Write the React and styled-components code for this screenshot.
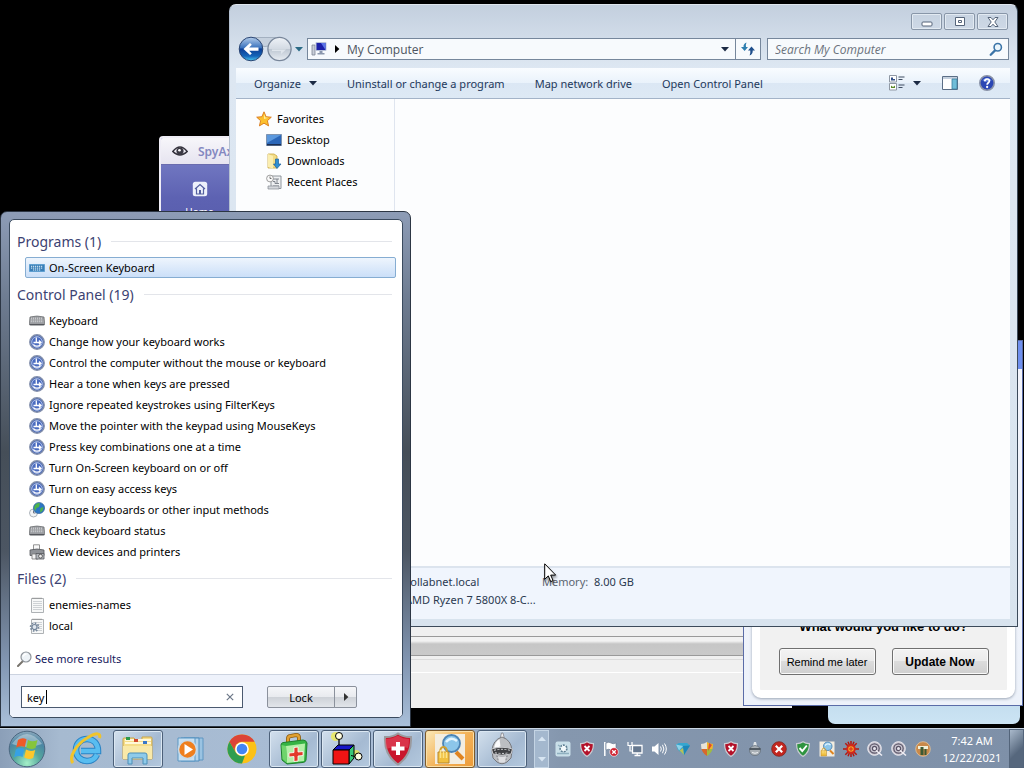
import styled, { createGlobalStyle, css } from "styled-components";

const FONT = `"Noto Sans", "Open Sans", sans-serif`;
const BAR_FONT = `"Open Sans", "Noto Sans", sans-serif`;

const COLOR = {
  toolbarText: "#1e395b",
  heading: "#3c4272",
  link: "#16205e",
  frameLine: "#3a4a5e",
  muted: "#5c6470",
};

const GlobalStyle = createGlobalStyle`
  * { box-sizing: border-box; }
  body {
    margin: 0;
    background: #000;
    font-family: ${FONT};
    font-size: 11px;
    color: #000;
  }
  button, input {
    font: inherit;
    color: inherit;
    margin: 0;
    padding: 0;
    border: 0;
    background: none;
  }
  ul, dl, dd, h2, p { margin: 0; padding: 0; list-style: none; }
  svg { display: block; flex: none; }
`;

/* ---------- icons ---------- */

const Icon = ({ size = 16, children, ...rest }) => (
  <svg width={size} height={size} viewBox="0 0 16 16" aria-hidden="true" {...rest}>
    {children}
  </svg>
);

const Triangle = ({ color = "#1b2a44", dir = "down" }) => (
  <svg width="8" height="8" viewBox="0 0 8 8" aria-hidden="true">
    <path
      d={{ down: "M0 2h8L4 6.4z", right: "M2 0v8l4.4-4z", up: "M0 6h8L4 1.6z" }[dir]}
      fill={color}
    />
  </svg>
);

const BackIcon = () => (
  <svg width="54" height="26" viewBox="0 0 54 26" aria-hidden="true">
    <defs>
      <linearGradient id="back" x1="0" y1="0" x2="0" y2="1">
        <stop offset="0" stopColor="#b4cdea" />
        <stop offset=".45" stopColor="#3a72bd" />
        <stop offset=".5" stopColor="#0c3f96" />
        <stop offset=".8" stopColor="#1464b8" />
        <stop offset="1" stopColor="#49c8f2" />
      </linearGradient>
      <linearGradient id="fwd" x1="0" y1="0" x2="0" y2="1">
        <stop offset="0" stopColor="#eef2f7" />
        <stop offset=".5" stopColor="#d3dae3" />
        <stop offset=".52" stopColor="#bfc8d3" />
        <stop offset="1" stopColor="#e8edf3" />
      </linearGradient>
    </defs>
    <path d="M16 1.500h22v6q-11 6-22 0z" fill="#c6d1de" stroke="#a3b0c0" />
    <circle cx="13" cy="13" r="11.800" fill="url(#back)" stroke="#2b4673" />
    <path d="M5.500 13l6.500-6 1.800 1.800-2.600 2.600h9.300v3.400h-9.300l2.600 2.600L12 19z" fill="#fff" />
    <circle cx="41.500" cy="13" r="11.600" fill="url(#fwd)" stroke="#78869a" strokeWidth="1.300" />
    <path d="M34 13.500h14l-5 4.500v-3h-9z" fill="#dfe5ec" />
  </svg>
);

const ComputerIcon = () => (
  <Icon>
    <path d="M1 4h3v10H1z" fill="#c8ced8" stroke="#7d8795" strokeWidth=".8" />
    <path d="M5 1.500h10v8H5z" fill="#1b20a8" stroke="#b9c3da" />
    <path d="M10 2h4.500v7z" fill="#5a74e8" />
    <path d="M8.500 10h3v2h2v1.500H6.500V12h2z" fill="#8b97ad" />
  </Icon>
);

const RefreshIcon = () => (
  <Icon>
    <path d="M1 6h2.600Q3 3 6.500 1.500 5.500 4 6 6h2L4.600 10z" fill="#2f7fb0" />
    <path d="M15 9.500h-2.300Q13 13 9.600 14.500 10.600 12 10.300 9.500H8L11.500 5.500z" fill="#1f4f8c" />
  </Icon>
);

const SearchIcon = ({ size = 14, color = "#3b74a8" }) => (
  <Icon size={size}>
    <path d="M7.500 9L2 14.500" stroke={color} strokeWidth="2.600" strokeLinecap="round" />
    <circle cx="10" cy="6" r="4.200" fill="#eaf5fc" stroke={color} strokeWidth="1.800" />
  </Icon>
);

const MoreIcon = () => (
  <Icon>
    <path d="M6 10L1 15" stroke="#77736c" strokeWidth="2" strokeLinecap="round" />
    <circle cx="9" cy="6" r="5" fill="#eef3f7" stroke="#8f959b" strokeWidth="1.200" />
    <path d="M6 5.500Q7 3 9.500 3" stroke="#fff" strokeWidth="1.500" fill="none" />
  </Icon>
);

const StarIcon = () => (
  <Icon>
    <path
      d="M8 .8l2.100 4.900 5.200.5-3.900 3.500 1.200 5.200L8 12.200l-4.600 2.700 1.200-5.200L.7 6.200l5.200-.5z"
      fill="#fbc02e"
      stroke="#d9771a"
      strokeWidth=".9"
    />
    <path d="M8 3l1.300 3.400 3 .4L8 8z" fill="#fff09a" />
  </Icon>
);

const DesktopIcon = () => (
  <Icon>
    <path d="M.5 2.500h15v11H.5z" fill="#2a66b8" stroke="#7d93b0" />
    <path d="M1 3h14L1 11z" fill="#5b98dd" />
    <path d="M1 12h14v1.500H1z" fill="#1a2e52" />
  </Icon>
);

const DownloadsIcon = () => (
  <Icon>
    <path d="M2 1h6l3 2v12H2z" fill="#f2dc86" stroke="#c9a744" strokeWidth=".8" />
    <path d="M2 1l5 2v12.500L2 14z" fill="#fbeeb0" />
    <path d="M9.500 6h3v5H15l-4 4.500L7.500 11h2z" fill="#2f8fd2" stroke="#1b5f9c" strokeWidth=".7" />
  </Icon>
);

const RecentIcon = () => (
  <Icon>
    <path d="M5 2h10v12.500H5z" fill="#eef0f2" stroke="#858b92" strokeWidth=".9" />
    <path d="M7 5h6M7 7.500h2v2h4M7 12h6M11 5v4" stroke="#757c85" strokeWidth=".9" fill="none" />
    <circle cx="4" cy="4.500" r="3.400" fill="#fafafa" stroke="#888" strokeWidth=".8" />
    <path d="M4 2.500v2h1.500" stroke="#555" strokeWidth=".8" fill="none" />
    <path d="M2 12h11v3H2z" fill="#d5d8dc" stroke="#858b92" strokeWidth=".7" />
  </Icon>
);

const ViewsIcon = () => (
  <Icon>
    <path d="M.5.5h7v6.500h-7zM.5 8.500h7V15h-7z" fill="#fff" stroke="#8f98a4" />
    <path d="M2 2.500h2V4h2v1.500H2z" fill="#2f4d86" />
    <path d="M2 10.500l2 1.500 2-1.500V13H2z" fill="#5d8a2a" />
    <path d="M9.500 2h6M9.500 4.500h4M9.500 10h6M9.500 12.500h4" stroke="#3f4d62" />
  </Icon>
);

const PaneIcon = () => (
  <Icon>
    <path d="M.5 1.500h15v13H.5z" fill="#fff" stroke="#5b6e86" />
    <path d="M1 2h14v2H1z" fill="#c4d0de" />
    <path d="M10 4h5v10h-5z" fill="#6fbdd8" stroke="#3e7fa0" strokeWidth=".8" />
  </Icon>
);

const HelpIcon = () => (
  <svg width="16" height="16" viewBox="0 0 24 24" aria-hidden="true">
    <circle cx="12" cy="12" r="10.800" fill="#2a46b4" stroke="#8a93a8" strokeWidth="2.400" />
    <path d="M5 8q7-7 14 0-7 4-14 0z" fill="#6f8de0" />
    <path
      d="M8.500 9.500Q9 6 12.200 6t3.400 3.100c0 2.600-3.400 2.600-3.400 5.400"
      fill="none"
      stroke="#fff"
      strokeWidth="2.600"
    />
    <circle cx="12.200" cy="18" r="1.700" fill="#fff" />
  </svg>
);

const OskIcon = () => (
  <Icon>
    <path d="M.5 4.500h15v7H.5z" fill="#3a7fb8" stroke="#5f9fd0" />
    <path
      d="M2 6.300h12M2 8.100h12M4 10h8"
      stroke="#e4f3fc"
      strokeWidth="1"
      strokeDasharray="1.200 .8"
    />
  </Icon>
);

const KeyboardIcon = () => (
  <Icon>
    <path d="M1 4q7-2 14 0l.7 7q-.4 1-1.500 1H1.800q-1.200 0-1.500-1z" fill="#9b9da1" stroke="#66686c" strokeWidth=".7" />
    <path d="M2 5.200h12M1.800 7h12.400M1.800 8.700h12.400" stroke="#dcdde0" strokeDasharray="1 1" />
    <path d="M.6 11h14.800v1.200H.6z" fill="#55575c" />
  </Icon>
);

const EaseIcon = () => (
  <Icon>
    <circle cx="8" cy="8" r="7.200" fill="#3f61b4" stroke="#8490ac" strokeWidth="1.500" />
    <circle cx="8" cy="8" r="5.300" fill="#4b6cc0" stroke="#c3cfec" strokeWidth=".9" />
    <path d="M7.300 3.500v5.200M4.500 8.500h7.300M10 6.500l2 2-2 1.800" stroke="#fff" strokeWidth="1.300" fill="none" />
    <path d="M4.300 10.500q3.700 3.400 7.400 0" stroke="#fff" strokeWidth="1.100" fill="none" />
  </Icon>
);

const GlobeIcon = () => (
  <Icon>
    <circle cx="4.500" cy="11" r="4" fill="#f2f4f6" stroke="#a4abb3" strokeWidth=".9" />
    <path d="M4.500 8.500V11h2" stroke="#70798a" fill="none" />
    <circle cx="10" cy="6" r="5.600" fill="#2c76c4" stroke="#2b5c90" strokeWidth=".6" />
    <path d="M6 3q3-3 5-1.500L10 5 7.500 6 6.500 9 5 6zM11.500 6l3-1-1 4-2.500 1.500z" fill="#4fb34a" />
  </Icon>
);

const PrinterIcon = () => (
  <Icon>
    <path d="M4.500.8h6v5h-6z" fill="#fafafa" stroke="#888" strokeWidth=".9" />
    <path d="M1 6q7-2 14 0v5.500H1z" fill="#8f9297" stroke="#54575c" strokeWidth=".8" />
    <path d="M3 10h6v5H3z" fill="#f4f4f4" stroke="#777" strokeWidth=".8" />
    <path d="M7 9.500h8V15H7z" fill="#b6b9be" stroke="#54575c" strokeWidth=".8" />
    <circle cx="11.500" cy="12.200" r="1.900" fill="#eee" stroke="#444" strokeWidth=".8" />
  </Icon>
);

const FileIcon = ({ gear }) => (
  <Icon>
    <path d="M2.500 1.500h12v14h-12z" fill="#f7f8f8" stroke="#a5a9ad" strokeWidth=".9" />
    <path d="M4 4.500h9M4 6.500h9M4 8.500h9M4 10.500h9M4 12.500h9" stroke="#c3c8cc" strokeWidth=".8" />
    <path d="M3.500 1.200h10" stroke="#777" strokeDasharray="1 1" />
    {gear && (
      <>
        <circle cx="5.500" cy="9" r="4" fill="none" stroke="#75879c" strokeWidth="1.600" strokeDasharray="1.600 1.500" />
        <circle cx="5.500" cy="9" r="2.500" fill="#dfe6ee" stroke="#75879c" strokeWidth="1.200" />
      </>
    )}
  </Icon>
);

const EyeIcon = () => (
  <Icon>
    <path d="M.8 8.500Q8-.5 15.200 8.500 8 15.500.8 8.500z" fill="#eceaf2" stroke="#34323c" strokeWidth="1.500" />
    <circle cx="8" cy="8" r="3.600" fill="#3b3944" />
    <circle cx="7.500" cy="7.300" r="1.300" fill="#fff" />
  </Icon>
);

const HomeIcon = () => (
  <Icon>
    <rect x=".8" y=".8" width="14.400" height="14.400" rx="2.500" fill="#eef1fb" />
    <path d="M3 8l5-4.500L13 8M4.500 7.500V13h7V7.500" fill="none" stroke="#5560a0" strokeWidth="1.200" />
    <path d="M7 9h2v4H7z" fill="#5560a0" />
  </Icon>
);

const StartOrb = () => (
  <svg width="38" height="38" viewBox="0 0 38 38" aria-hidden="true">
    <defs>
      <radialGradient id="orb" cx=".5" cy=".9" r=".95">
        <stop offset="0" stopColor="#a4efc8" />
        <stop offset=".4" stopColor="#55a79c" />
        <stop offset=".7" stopColor="#4a86a4" />
        <stop offset="1" stopColor="#9ab0c2" />
      </radialGradient>
    </defs>
    <circle cx="19" cy="19" r="17.800" fill="url(#orb)" stroke="#4b6780" />
    <path d="M4 14Q19-6 34 14q-15 6-30 0z" fill="#fff" opacity=".35" />
    <path d="M10 10q4-3 8.500-.8L16.800 17q-4-2-8.600.6z" fill="#ef5a28" />
    <path d="M20 10q4.500 2.400 9.500 0L27.500 18q-4.500 2-9.200-.4z" fill="#86c53c" />
    <path d="M7.800 19.500q4.500-2.600 8.600-.6l-1.900 8q-4-2-8.500.6z" fill="#36a1e4" />
    <path d="M18 19.600q4.500 2.400 9.200.4l-2 8q-4.700 2-9-.4z" fill="#fdc72c" />
  </svg>
);

const IeIcon = () => (
  <svg width="34" height="34" viewBox="0 0 34 34" aria-hidden="true">
    <path
      d="M28 22.500C26.200 26.500 22.500 29 18 29c-6.500 0-11-4.600-11-11S11.500 7 18 7s11 4.800 11 12H12"
      fill="none"
      stroke="#2a83c4"
      strokeWidth="6.500"
    />
    <path
      d="M28 22.500C26.200 26.500 22.500 29 18 29c-6.500 0-11-4.600-11-11S11.500 7 18 7s11 4.800 11 12H12"
      fill="none"
      stroke="#58bdf0"
      strokeWidth="4.500"
    />
    <path d="M4 31C-1 25 8 12 18 6s14-5 12.500 0" fill="none" stroke="#f0c42c" strokeWidth="3" />
  </svg>
);

const FolderIcon = () => (
  <svg width="34" height="34" viewBox="0 0 34 34" aria-hidden="true">
    <path d="M3 6h10l2 2h6V5h9q1 0 1 1v21H2V7q0-1 1-1z" fill="#f5dd8a" stroke="#c9a548" />
    <path d="M4 8h26M4 11h26" stroke="#fff8d8" strokeWidth="2" />
    <path d="M5 5h4v3H5z" fill="#2c9a4a" />
    <path d="M13 7h4v3h-4z" fill="#d24a2e" />
    <path d="M22 9h4v3h-4z" fill="#3a78c8" />
    <path d="M2 14h29v13H2z" fill="#f9e9a8" />
    <path d="M7 32V23q0-2 2-2h15q2 0 2 2v9h-4v-6H11v6z" fill="#8fcbea" stroke="#4d8fb8" />
  </svg>
);

const MediaIcon = () => (
  <svg width="30" height="30" viewBox="0 0 30 30" aria-hidden="true">
    <path d="M9 4h19v22H9z" fill="#9ac3e2" stroke="#5f96c2" />
    <path d="M6 4h18v23H6z" fill="#b4d4ec" stroke="#4f8dbd" />
    <path d="M3 4h17v23H3z" fill="#c8e0f2" stroke="#5b97c4" />
    <circle cx="12.500" cy="15.500" r="9" fill="#ef7f1e" stroke="#c8dae8" strokeWidth="1.500" />
    <path d="M9.500 10v11l8.500-5.500z" fill="#fff" />
  </svg>
);

const ChromeIcon = () => (
  <svg width="30" height="30" viewBox="0 0 30 30" aria-hidden="true">
    <circle cx="15" cy="15" r="14.500" fill="#fbc116" />
    <path d="M2.440 7.750A14.500 14.500 0 0 1 27.560 7.750H15A7.250 7.250 0 0 0 8.700 18.600z" fill="#dc4437" />
    <path d="M2.440 7.750 8.720 18.620A7.250 7.250 0 0 0 18 21.500L15 29.500A14.500 14.500 0 0 1 2.440 7.750z" fill="#2f9e50" />
    <circle cx="15" cy="15" r="6.800" fill="#fff" />
    <circle cx="15" cy="15" r="5.300" fill="#4285f4" />
  </svg>
);

const KitIcon = () => (
  <svg width="32" height="32" viewBox="0 0 32 32" aria-hidden="true">
    <path d="M10 10V6q0-3 3-3l5-1q3 0 3 3v4" fill="none" stroke="#8a5a10" strokeWidth="4" />
    <path d="M10 10V6q0-3 3-3l5-1q3 0 3 3v4" fill="none" stroke="#e0a030" strokeWidth="2.400" />
    <path d="M3 12q0-2 2-2.400L25 7q3 0 4 3l-1 17q-.4 2-2.500 2.400L9 31 4 27z" fill="#35b445" stroke="#1f7f2c" />
    <path d="M8 13l19-2.500-1 17.500L9 30z" fill="#b4f0a8" />
    <path d="M3.500 12L8 13l1 17-4.500-4z" fill="#6fd46c" />
    <path d="M16 14.500l4-.5v5l5-.5v4l-5 .5v5l-4 .5v-5l-5 .5v-4l5-.5z" fill="#e23a2a" stroke="#fff" strokeWidth=".8" />
  </svg>
);

const CubeIcon = () => (
  <svg width="34" height="36" viewBox="0 0 34 36" aria-hidden="true">
    <circle cx="6.500" cy="5.500" r="4.500" fill="#f7f03c" opacity=".7" />
    <path d="M10 7v12M20 24l8 2" stroke="#000" strokeWidth="1.300" />
    <circle cx="10" cy="5" r="3.500" fill="#fffde0" stroke="#000" />
    <circle cx="27" cy="23" r="4" fill="#f7f03c" opacity=".7" />
    <circle cx="29.500" cy="25.500" r="3.500" fill="#fffde0" stroke="#000" />
    <path d="M4 19l5-5h16l-5 5z" fill="#1616c8" stroke="#000" />
    <path d="M20 19l5-5v13l-5 6z" fill="#3ac878" stroke="#000" />
    <path d="M4 19h16v14H4z" fill="#f01414" stroke="#000" />
    <path d="M22 24.500l4 1" stroke="#000" />
  </svg>
);

const ShieldIcon = () => (
  <svg width="32" height="34" viewBox="0 0 32 34" aria-hidden="true">
    <path d="M16 1.500q6 4 13 3.500 1 18-13 27.500Q2 23 3 5q7 .5 13-3.500z" fill="#c9152c" stroke="#9a9a9e" strokeWidth="2" />
    <path d="M16 3.500q5 3.500 11 3.500 0 5-1 9-10-3-22 1-1-5-1-10 7 0 13-3.500z" fill="#e9566a" opacity=".5" />
    <path d="M14 10h4v4.500h4.500v4H18V23h-4v-4.500H9.500v-4H14z" fill="#fff" />
  </svg>
);

const SpyFinderIcon = ({ size = 32 }) => (
  <svg width={size} height={size} viewBox="0 0 32 32" aria-hidden="true">
    <path d="M1 1h30v30H1z" fill="#f3ede0" />
    <path d="M22 19l7 7" stroke="#e08420" strokeWidth="4" />
    <circle cx="17.500" cy="10.500" r="8.500" fill="#8cc6ea" stroke="#4d84b4" strokeWidth="1.800" />
    <path d="M12 9q5-6 11-1" stroke="#e3f5ff" strokeWidth="2.500" fill="none" />
    <path d="M6 20q0-6 3.500-6t3.500 6" fill="none" stroke="#d0a030" strokeWidth="2" />
    <path d="M4 19h11v11H4z" fill="#f0c040" stroke="#b8862c" />
    <path d="M6.500 17v8M9.500 18v7M12.500 19v6" stroke="#fbe28a" strokeWidth="1.500" />
  </svg>
);

const HelmetIcon = ({ size = 34 }) => (
  <svg width={size} height={size} viewBox="0 0 34 34" aria-hidden="true">
    <path d="M16.500 1h1.500l1.500 6h-4.500z" fill="#f0f0f2" stroke="#77777c" strokeWidth=".7" />
    <path d="M17 5Q7.500 8 7 19l1 7 4 4q5 3.500 10 0l4-4 1-7Q26.500 8 17 5z" fill="#bcbec2" stroke="#77797e" />
    <path d="M14.500 7Q9 11 9.500 16l6-1.500z" fill="#fbfbfc" />
    <path d="M6.500 17Q17 13.500 27.500 17l-1.500 5q-9 2.500-18 0z" fill="#3f4043" stroke="#c9cace" />
    <path d="M9 18.300q8-2 16 0M10 20.800q7 1.300 14 0" stroke="#d6d7da" strokeDasharray="2 1.500" fill="none" />
    <path d="M11 24q6 2 12 0M12 27q5 1.600 10 0" stroke="#87898e" fill="none" />
    <path d="M13 24q4 1.500 8 0l-1 6q-3 1-6 0z" fill="#dedfe2" />
  </svg>
);

/* tray icons, 16px */
const TrayShield = ({ fill = "#b3122a", mark = "x" }) => (
  <Icon>
    <path d="M8 .8q3 2 6.400 1.800.4 8.700-6.400 12.800Q1.200 11.300 1.600 2.600 5 2.800 8 .8z" fill={fill} stroke="#c9ccd2" strokeWidth="1.200" />
    {mark === "x" ? (
      <path d="M5.500 5l5 5m0-5l-5 5" stroke="#fff" strokeWidth="1.800" />
    ) : (
      <path d="M4.500 7l2.800 3 4.500-5.500" stroke="#fff" strokeWidth="1.900" fill="none" />
    )}
  </Icon>
);

const GearTrayIcon = () => (
  <Icon>
    <rect x=".5" y=".5" width="15" height="15" rx="2" fill="#c9dfe9" />
    <circle cx="8.500" cy="7.500" r="3.400" fill="#f4fafc" stroke="#5f8094" strokeWidth="1.600" strokeDasharray="2 1" />
    <path d="M3 4l3 2M2 12.500h12" stroke="#8fb0c0" strokeWidth="1.300" />
  </Icon>
);

const FlagIcon = () => (
  <Icon>
    <path d="M1.800 1v14" stroke="#fff" strokeWidth="1.500" />
    <path d="M3 2q3-1.500 5 0t5 0v7q-3 1.500-5 0T3 9z" fill="#fff" stroke="#63728a" strokeWidth=".6" />
    <circle cx="11" cy="11" r="4.300" fill="#cf2130" stroke="#fff" strokeWidth=".6" />
    <path d="M9.200 9.200l3.600 3.600m0-3.600l-3.600 3.600" stroke="#fff" strokeWidth="1.300" />
  </Icon>
);

const NetworkIcon = () => (
  <Icon>
    <path d="M5.500 4.500h9.500v7.500H5.500z" fill="#66788f" stroke="#fff" strokeWidth="1.300" />
    <path d="M7.500 14.500h6M10.200 12v2" stroke="#fff" strokeWidth="1.300" />
    <path d="M1 1v3.500h4V1M3 4.500V10h2" stroke="#fff" strokeWidth="1.200" fill="none" />
  </Icon>
);

const SpeakerIcon = () => (
  <Icon>
    <path d="M1 5.500h2.500L7.500 2v12L3.500 10.500H1z" fill="#fff" />
    <path d="M9.500 5.500q1.600 2.500 0 5M11.500 3.800q2.800 4.200 0 8.400M13.500 2.500q3.600 5.500 0 11" stroke="#fff" fill="none" />
  </Icon>
);

const GemIcon = () => (
  <Icon>
    <path d="M1 3.500L4 2h8l3 2.500L9 14 3 9z" fill="#35a6cf" />
    <path d="M1 3.500l7 1.500-4 4.500z" fill="#8fd2e8" />
    <path d="M8 5l7-.5L9 14z" fill="#1f86b8" />
    <path d="M4.500 9.500L8 7l1 7z" fill="#b9bf58" />
  </Icon>
);

const DefenderIcon = () => (
  <Icon>
    <path d="M8 1v7H2.500Q2 5 2 3q3 0 6-2z" fill="#e8e3d8" />
    <path d="M8 1v7h5.500Q14 5 14 3q-3 0-6-2z" fill="#f0b62a" />
    <path d="M8 8v7Q3.500 12 2.500 8z" fill="#d9682a" />
    <path d="M8 8v7q4.500-3 5.500-7z" fill="#a0bb42" />
    <path d="M10 2l3 2-4 6z" fill="#e04a2e" />
  </Icon>
);

const ErrorIcon = () => (
  <Icon>
    <circle cx="8" cy="8" r="7.300" fill="#c3261f" stroke="#7d2622" strokeWidth=".8" />
    <path d="M4.800 4.800l6.400 6.400m0-6.400l-6.400 6.400" stroke="#fff" strokeWidth="2.200" />
  </Icon>
);

const KnobIcon = () => (
  <Icon>
    <path d="M7 1h2l1 4H6z" fill="#dfe3e6" />
    <path d="M3 7q5-5 10 0l.5 3q-1 4.500-5.500 4.500T2.500 10z" fill="#a9b0b6" stroke="#66717c" strokeWidth=".8" />
    <path d="M2.500 8h11" stroke="#3e4850" strokeWidth="1.600" />
    <path d="M5 11.500q3 1.500 6 0" stroke="#eef1f3" fill="none" />
  </Icon>
);

const VirusIcon = () => (
  <Icon>
    <g stroke="#b3170f" strokeWidth="1.500">
      <path d="M8 0v16M0 8h16M2.300 2.300l11.400 11.400M13.700 2.300L2.300 13.700M5 .8l6 14.400M11 .8L5 15.200" />
    </g>
    <circle cx="8" cy="8" r="4.800" fill="#d6281a" />
    <circle cx="8" cy="8" r="2.800" fill="#f6a52a" />
    <path d="M6 8h4M8 6v4" stroke="#d6281a" />
  </Icon>
);

const SpiralIcon = () => (
  <Icon>
    <circle cx="7.500" cy="7.500" r="6.800" fill="#c9c6d0" stroke="#eceaf0" />
    <circle cx="7.500" cy="7.500" r="4.700" fill="none" stroke="#5b5568" strokeWidth="1.200" />
    <circle cx="7.500" cy="7.500" r="2.100" fill="#e8e6ee" stroke="#5b5568" strokeWidth="1.200" />
    <path d="M9 9.500l6 5" stroke="#f1eff5" strokeWidth="1.500" />
  </Icon>
);

const HammerIcon = () => (
  <Icon>
    <circle cx="8" cy="8" r="7.300" fill="#c9894a" stroke="#e3c49a" strokeWidth=".8" />
    <path d="M3 5h10v3H3z" fill="#f2f0d8" />
    <path d="M5.500 6h3v8h-3zM9.500 8h2v6h-2z" fill="#3c5a34" />
  </Icon>
);

/* ---------- windows ---------- */

const Screen = styled.div`
  display: flex;
  flex-direction: column;
  min-height: 100vh;
  overflow: hidden;
`;

const Desktop = styled.main`
  position: relative;
  flex: 1;
  overflow: hidden;
`;

const Win = styled.section`
  position: absolute;
  display: flex;
  flex-direction: column;
  overflow: hidden;
`;

const SpyWindow = styled(Win)`
  left: 159px;
  top: 136px;
  width: 240px;
  height: 180px;
  border: 2px solid #efedf6;
  border-radius: 4px 0 0 0;
  background: linear-gradient(#7f86cc, #5d62b2 60px, #4a4f9c);

  header {
    display: flex;
    align-items: center;
    gap: 10px;
    height: 27px;
    padding-left: 11px;
    background: linear-gradient(#f7f6fa, #e6e4f0);
    border-bottom: 1px solid #6a6cae;
    font-size: 12px;
    font-weight: 600;
    color: #8387c0;
  }
`;

const SpyHome = styled.button`
  display: flex;
  flex-direction: column;
  align-items: center;
  gap: 8px;
  width: 77px;
  padding-top: 16px;
  font-size: 10px;
  line-height: 14px;
  color: #fff;
`;

const ProgressWindow = styled(Win)`
  left: 240px;
  right: 232px;
  bottom: 20px;
  height: 120px;
  justify-content: flex-end;
  background: #f0f0f0;
`;

const ProgressTrack = styled.div`
  height: 20px;
  border: solid #9a9a9a;
  border-width: 1px 0;
  background: linear-gradient(#f2f2f2, #f2f2f2 4px, #c6c6c6 7px, #cacaca);
`;

const ProgressFooter = styled.div`
  height: 49px;
  margin-top: 3px;
  border-top: 1px solid #dcdcdc;
  background: linear-gradient(#f0f0f0 12px, #fff 12px, #fff 13px, #efefef 13px);
`;

const BlueNote = styled.div`
  position: absolute;
  right: 4px;
  bottom: 4px;
  width: 192px;
  height: 40px;
  border-radius: 0 0 7px 7px;
  background: linear-gradient(#bcd8ea, #cce4f4);
`;

const UpdateWindow = styled(Win)`
  right: 1px;
  top: 340px;
  bottom: 22px;
  width: 280px;
  border: 1px solid #5a6ca8;
  background: linear-gradient(#6f90ee 28px, #f4f5fc 28px, #edf2fa);
  padding: 36px 7px 7px 8px;
`;

const UpdateBody = styled.div`
  flex: 1;
  display: flex;
  flex-direction: column;
  justify-content: flex-end;
  align-items: center;
  gap: 12px;
  border: 8px solid #fff;
  border-radius: 9px;
  box-shadow: 0 1px 3px #9aa4b4;
  background: #f1f1f1;
  padding-bottom: 15px;
  font: bold 13px/18px "Liberation Sans", Arial, sans-serif;
`;

const UpdateActions = styled.div`
  display: flex;
  gap: 16px;
`;

const UpdateButton = styled.button`
  width: 97px;
  height: 27px;
  border: 1px solid #707070;
  border-radius: 3px;
  background: linear-gradient(#f3f3f3, #ebebeb 50%, #dcdcdc 50%, #cfcfcf);
  box-shadow: inset 0 0 0 1px #fafafa;
  font: ${({ $primary }) => ($primary ? "bold 12px" : "11px")} "Liberation Sans", Arial, sans-serif;
`;

/* ---------- explorer ---------- */

const Explorer = styled(Win)`
  left: 229px;
  right: 6px;
  top: 4px;
  bottom: 101px;
  padding: 0 7px 7px 6px;
  border: 1px solid #3c4a5a;
  border-top-color: #dfe6ee;
  border-left-color: #b4c0d0;
  border-radius: 7px 7px 0 0;
  background: linear-gradient(#c3cfde, #d0dbe8 30px, #dde7f2 62px, #d8e3ee);
`;

const CaptionBar = styled.header`
  display: flex;
  justify-content: flex-end;
  gap: 2px;
  height: 33px;
  padding: 8px 2px 0 0;
`;

const CaptionButton = styled.button`
  display: flex;
  align-items: center;
  justify-content: center;
  width: 31px;
  height: 17px;
  border: 1px solid #8896a8;
  border-radius: 2px;
  box-shadow: inset 0 0 0 1px #e2eaf2;
`;

const NavBar = styled.div`
  display: flex;
  align-items: center;
  height: 22px;
  padding: 0 1px 0 2px;
  font-family: ${BAR_FONT};
  font-size: 12px;
`;

const NavButtons = styled.button`
  margin-right: 3px;
`;

const AddressBar = styled.div`
  flex: 1;
  display: flex;
  align-items: center;
  height: 22px;
  margin-left: 4px;
  border: 1px solid #76879c;
  background: #f7fafd;
  color: #4c5460;
`;

const Crumb = styled.button`
  display: flex;
  flex: 1;
  align-items: center;
  gap: 6px;
  padding-left: 3px;
`;

const AddressButton = styled.button`
  display: flex;
  align-items: center;
  justify-content: center;
  width: ${({ $wide }) => ($wide ? "25px" : "20px")};
  height: 20px;
  border-left: ${({ $wide }) => ($wide ? "1px solid #76879c" : "0")};
`;

const SearchBox = styled.label`
  display: flex;
  align-items: center;
  width: 242px;
  height: 22px;
  margin-left: 6px;
  padding: 0 5px 0 7px;
  border: 1px solid #76879c;
  background: #f7fafd;

  input {
    flex: 1;
    min-width: 0;
    outline: none;
    font-style: italic;
    &::placeholder {
      color: #6b727c;
      opacity: 1;
    }
  }
`;

const ToolBar = styled.div`
  display: flex;
  align-items: center;
  gap: 30px;
  height: 31px;
  margin-top: 8px;
  padding: 0 15px 0 18px;
  border-bottom: 1px solid #a3b3c8;
  background: linear-gradient(#f9fcff, #e9f2fb 50%, #dbe7f4 50%, #dde9f5);
  color: ${COLOR.toolbarText};
`;

const ToolButton = styled.button`
  display: flex;
  align-items: center;
  gap: 8px;
  white-space: nowrap;
`;

const ToolIcons = styled.div`
  display: flex;
  align-items: center;
  gap: 21px;
  margin-left: auto;
`;

const Body = styled.div`
  flex: 1;
  display: flex;
  background: #fcfdfe;
`;

const Tree = styled.ul`
  width: 159px;
  padding: 9px 0 0 20px;
  border-right: 1px solid #dfe5ef;
`;

const TreeItem = styled.li`
  padding-left: ${({ $root }) => ($root ? "0" : "10px")};

  button {
    display: flex;
    align-items: center;
    gap: 5px;
    height: 21px;
  }
`;

const Details = styled.dl`
  display: grid;
  grid-template-columns: 137px 52px auto;
  align-content: start;
  height: 53px;
  padding: 5px 0 0 169px;
  border-top: 2px solid #dce4ee;
  background: #f0f5fd;
  line-height: 18px;
  color: #2a3950;
  white-space: nowrap;

  dt {
    color: ${COLOR.muted};
  }
`;

/* ---------- start menu ---------- */

const StartMenu = styled.section`
  position: absolute;
  left: 0;
  bottom: 1px;
  width: 411px;
  padding: 7px 7px 8px 8px;
  border: 1px solid #2c3644;
  border-radius: 7px 7px 0 0;
  background: linear-gradient(#8d9cb6, #6d7b90 90px, #454e58 240px, #4c5663 340px, #8296b2 450px, #a9bfd9);
`;

const MenuSheet = styled.div`
  border: 1px solid ${COLOR.frameLine};
  border-radius: 5px;
  background: #fff;
  overflow: hidden;
`;

const Results = styled.div`
  padding: 5px 6px 5px 7px;
`;

const GroupTitle = styled.h2`
  display: flex;
  align-items: center;
  gap: 10px;
  height: 32px;
  font-size: 14px;
  font-weight: 400;
  color: ${COLOR.heading};

  &::after {
    content: "";
    flex: 1;
    margin-right: 4px;
    border-top: 1px solid #e3e5ea;
  }
`;

const ResultItem = styled.button`
  display: flex;
  align-items: center;
  gap: 4px;
  width: calc(100% - 8px);
  height: 21px;
  margin-left: 8px;
  padding-left: 3px;
  border: 1px solid transparent;
  border-radius: 2px;
  ${({ $selected }) =>
    $selected &&
    css`
      border-color: #86add2;
      background: linear-gradient(#eef5fd, #cbdff8);
    `}
`;

const MoreLink = styled.a`
  display: flex;
  align-items: center;
  gap: 2px;
  height: 21px;
  margin-top: 12px;
  color: ${COLOR.link};
  text-decoration: none;
`;

const MenuFooter = styled.div`
  display: flex;
  align-items: center;
  gap: 24px;
  height: 43px;
  padding: 2px 12px 0 11px;
  border-top: 1px solid #ccd3e0;
  background: #eef2fb;
`;

const QueryBox = styled.div`
  position: relative;
  display: flex;
  width: 222px;
  height: 22px;
  border: 1px solid #4b5a70;
  background: #fff;

  input {
    flex: 1;
    min-width: 0;
    padding-left: 5px;
    outline: none;
  }
  button {
    width: 24px;
    display: flex;
    align-items: center;
    justify-content: center;
  }
`;

const Caret = styled.span`
  position: absolute;
  left: 24px;
  top: 3px;
  width: 1px;
  height: 14px;
  background: #000;
`;

const LockGroup = styled.div`
  display: flex;

  button {
    display: flex;
    align-items: center;
    justify-content: center;
    width: 68px;
    height: 22px;
    border: 1px solid #8b919c;
    border-radius: 2px 0 0 2px;
    background: linear-gradient(#f5f6f9, #e9ebef 48%, #cdd1d7 50%, #e2e5ea);
  }
  button + button {
    width: 23px;
    margin-left: -1px;
    border-radius: 0 2px 2px 0;
  }
`;

/* ---------- taskbar ---------- */

const TaskBar = styled.footer`
  display: flex;
  align-items: center;
  height: 40px;
  border-top: 1px solid #c9d6e4;
  background: linear-gradient(90deg, #8b9fb8, #a6bad0 60px, #a9bdd6 400px, #8597ae 560px, #7e90a8);
`;

const StartButton = styled.button`
  width: 61px;
  padding-left: 8px;
`;

const TaskList = styled.nav`
  display: flex;
  gap: 2px;
`;

const TaskButton = styled.button`
  display: flex;
  align-items: center;
  justify-content: center;
  width: 50px;
  height: 38px;
  border: 1px solid transparent;
  border-radius: 3px;
  ${({ $state }) =>
    $state === "open" &&
    css`
      border-color: #4c6079;
      background: linear-gradient(135deg, #d3e0ed, #a5bad2 60%, #b4c9de);
      box-shadow: inset 0 0 0 1px #dbe7f2;
    `}
  ${({ $state }) =>
    $state === "alert" &&
    css`
      border-color: #7c5a2c;
      background: linear-gradient(135deg, #fbe9b8, #f3b45c 50%, #ec9a38);
      box-shadow: inset 0 0 0 1px #fbe0a8;
    `}
`;

const Tray = styled.div`
  display: flex;
  align-items: center;
  height: 100%;
  margin-left: auto;
`;

const TrayScroll = styled.div`
  display: flex;
  flex-direction: column;
  justify-content: space-between;
  align-items: center;
  width: 15px;
  height: 38px;
  margin-right: 2px;
  padding: 4px 0;
  border: 1px solid #c4d4e4;
  background: #a4b8ce;

  button {
    height: 8px;
  }
`;

const TrayButton = styled.button`
  display: flex;
  justify-content: center;
  width: 24px;
`;

const Clock = styled.button`
  width: 74px;
  line-height: 17px;
  text-align: center;
  color: #fff;
`;

const ShowDesktop = styled.button`
  width: 15px;
  height: 39px;
  border: 1px solid #53647a;
  background: linear-gradient(135deg, #a9b9cb, #56677d 60%);
`;

const Pointer = styled.svg`
  position: absolute;
  left: 544px;
  top: 563px;
  filter: drop-shadow(1px 2px 1px #00000066);
`;

const TREE = [
  { label: "Favorites", icon: <StarIcon />, root: true },
  { label: "Desktop", icon: <DesktopIcon /> },
  { label: "Downloads", icon: <DownloadsIcon /> },
  { label: "Recent Places", icon: <RecentIcon /> },
];

const GROUPS = [
  {
    title: "Programs (1)",
    items: [{ label: "On-Screen Keyboard", icon: <OskIcon />, selected: true }],
  },
  {
    title: "Control Panel (19)",
    items: [
      { label: "Keyboard", icon: <KeyboardIcon /> },
      { label: "Change how your keyboard works", icon: <EaseIcon /> },
      { label: "Control the computer without the mouse or keyboard", icon: <EaseIcon /> },
      { label: "Hear a tone when keys are pressed", icon: <EaseIcon /> },
      { label: "Ignore repeated keystrokes using FilterKeys", icon: <EaseIcon /> },
      { label: "Move the pointer with the keypad using MouseKeys", icon: <EaseIcon /> },
      { label: "Press key combinations one at a time", icon: <EaseIcon /> },
      { label: "Turn On-Screen keyboard on or off", icon: <EaseIcon /> },
      { label: "Turn on easy access keys", icon: <EaseIcon /> },
      { label: "Change keyboards or other input methods", icon: <GlobeIcon /> },
      { label: "Check keyboard status", icon: <KeyboardIcon /> },
      { label: "View devices and printers", icon: <PrinterIcon /> },
    ],
  },
  {
    title: "Files (2)",
    items: [
      { label: "enemies-names", icon: <FileIcon /> },
      { label: "local", icon: <FileIcon gear /> },
    ],
  },
];

const TASKS = [
  { id: "ie", icon: <IeIcon /> },
  { id: "explorer", icon: <FolderIcon />, state: "open" },
  { id: "media", icon: <MediaIcon /> },
  { id: "chrome", icon: <ChromeIcon /> },
  { id: "kit", icon: <KitIcon />, state: "open" },
  { id: "cube", icon: <CubeIcon />, state: "open" },
  { id: "shield", icon: <ShieldIcon />, state: "open" },
  { id: "finder", icon: <SpyFinderIcon />, state: "alert" },
  { id: "helmet", icon: <HelmetIcon />, state: "open" },
];

const TRAY = [
  { id: "gear", icon: <GearTrayIcon /> },
  { id: "shield-a", icon: <TrayShield /> },
  { id: "flag", icon: <FlagIcon /> },
  { id: "network", icon: <NetworkIcon /> },
  { id: "speaker", icon: <SpeakerIcon /> },
  { id: "gem", icon: <GemIcon /> },
  { id: "defender", icon: <DefenderIcon /> },
  { id: "shield-b", icon: <TrayShield /> },
  { id: "knob", icon: <KnobIcon /> },
  { id: "error", icon: <ErrorIcon /> },
  { id: "shield-ok", icon: <TrayShield fill="#2f9440" mark="check" /> },
  { id: "finder", icon: <SpyFinderIcon size={16} /> },
  { id: "virus", icon: <VirusIcon /> },
  { id: "spiral-a", icon: <SpiralIcon /> },
  { id: "spiral-b", icon: <SpiralIcon /> },
  { id: "hammer", icon: <HammerIcon /> },
];

const ExplorerWindow = () => (
  <Explorer>
    <CaptionBar>
      <CaptionButton type="button">
        <svg width="12" height="10" viewBox="0 0 12 10">
          <rect x="1" y="5" width="10" height="4" rx="1" fill="#fff" stroke="#56657a" />
        </svg>
      </CaptionButton>
      <CaptionButton type="button">
        <svg width="12" height="10" viewBox="0 0 12 10">
          <path d="M1.500.5h9v8h-9zM4.500 3.500h3v2h-3z" fill="#fff" stroke="#56657a" />
        </svg>
      </CaptionButton>
      <CaptionButton type="button">
        <svg width="12" height="10" viewBox="0 0 12 10">
          <path d="M1 .5h3l2 2.300L8 .5h3L7.800 5 11 9.500H8L6 7.200 4 9.500H1L4.200 5z" fill="#fff" stroke="#56657a" />
        </svg>
      </CaptionButton>
    </CaptionBar>
    <NavBar>
      <NavButtons type="button">
        <BackIcon />
      </NavButtons>
      <Triangle color="#2a6a86" />
      <AddressBar>
        <Crumb type="button">
          <ComputerIcon />
          <Triangle dir="right" color="#000" />
          <span>My Computer</span>
        </Crumb>
        <AddressButton type="button">
          <Triangle />
        </AddressButton>
        <AddressButton type="button" $wide>
          <RefreshIcon />
        </AddressButton>
      </AddressBar>
      <SearchBox>
        <input type="text" placeholder="Search My Computer" />
        <SearchIcon />
      </SearchBox>
    </NavBar>
    <ToolBar>
      <ToolButton type="button">
        Organize <Triangle />
      </ToolButton>
      <ToolButton type="button">Uninstall or change a program</ToolButton>
      <ToolButton type="button">Map network drive</ToolButton>
      <ToolButton type="button">Open Control Panel</ToolButton>
      <ToolIcons>
        <ToolButton type="button">
          <ViewsIcon />
          <Triangle />
        </ToolButton>
        <ToolButton type="button">
          <PaneIcon />
        </ToolButton>
        <ToolButton type="button">
          <HelpIcon />
        </ToolButton>
      </ToolIcons>
    </ToolBar>
    <Body>
      <Tree>
        {TREE.map(({ label, icon, root }) => (
          <TreeItem key={label} $root={root}>
            <button type="button">
              {icon}
              {label}
            </button>
          </TreeItem>
        ))}
      </Tree>
    </Body>
    <Details>
      <dd>collabnet.local</dd>
      <dt>Memory:</dt>
      <dd>8.00 GB</dd>
      <dd>AMD Ryzen 7 5800X 8-C...</dd>
    </Details>
  </Explorer>
);

const SearchMenu = () => (
  <StartMenu>
    <MenuSheet>
      <Results>
        {GROUPS.map(({ title, items }) => (
          <div key={title}>
            <GroupTitle>{title}</GroupTitle>
            {items.map(({ label, icon, selected }) => (
              <ResultItem key={label} type="button" $selected={selected}>
                {icon}
                {label}
              </ResultItem>
            ))}
          </div>
        ))}
        <MoreLink href="#more">
          <MoreIcon />
          See more results
        </MoreLink>
      </Results>
      <MenuFooter>
        <QueryBox>
          <input type="text" defaultValue="key" aria-label="Search programs and files" />
          <Caret />
          <button type="button">
            <svg width="8" height="8" viewBox="0 0 8 8">
              <path d="M.8.8l6.400 6.400m0-6.400L.8 7.200" stroke="#6d7888" strokeWidth="1.200" />
            </svg>
          </button>
        </QueryBox>
        <LockGroup>
          <button type="button">Lock</button>
          <button type="button">
            <Triangle dir="right" color="#333" />
          </button>
        </LockGroup>
      </MenuFooter>
    </MenuSheet>
  </StartMenu>
);

const App = () => (
  <Screen>
    <GlobalStyle />
    <Desktop>
      <SpyWindow>
        <header>
          <EyeIcon />
          <span>SpyAx</span>
        </header>
        <SpyHome type="button">
          <HomeIcon />
          Home
        </SpyHome>
      </SpyWindow>
      <ProgressWindow>
        <ProgressTrack />
        <ProgressFooter />
      </ProgressWindow>
      <BlueNote />
      <UpdateWindow>
        <UpdateBody>
          <p>What would you like to do?</p>
          <UpdateActions>
            <UpdateButton type="button">Remind me later</UpdateButton>
            <UpdateButton type="button" $primary>
              Update Now
            </UpdateButton>
          </UpdateActions>
        </UpdateBody>
      </UpdateWindow>
      <ExplorerWindow />
      <SearchMenu />
      <Pointer width="13" height="20" viewBox="0 0 13 20" aria-hidden="true">
        <path d="M.7.8v15.500l3.600-3.400 2.400 5.700 2.400-1-2.400-5.500h5z" fill="#fff" stroke="#000" />
      </Pointer>
    </Desktop>
    <TaskBar>
      <StartButton type="button">
        <StartOrb />
      </StartButton>
      <TaskList>
        {TASKS.map(({ id, icon, state }) => (
          <TaskButton key={id} type="button" $state={state}>
            {icon}
          </TaskButton>
        ))}
      </TaskList>
      <Tray>
        <TrayScroll>
          <button type="button">
            <Triangle dir="up" color="#d7e5f2" />
          </button>
          <button type="button">
            <Triangle color="#d7e5f2" />
          </button>
        </TrayScroll>
        {TRAY.map(({ id, icon }) => (
          <TrayButton key={id} type="button">
            {icon}
          </TrayButton>
        ))}
        <Clock type="button">
          7:42 AM
          <br />
          12/22/2021
        </Clock>
        <ShowDesktop type="button" />
      </Tray>
    </TaskBar>
  </Screen>
);

export default App;
